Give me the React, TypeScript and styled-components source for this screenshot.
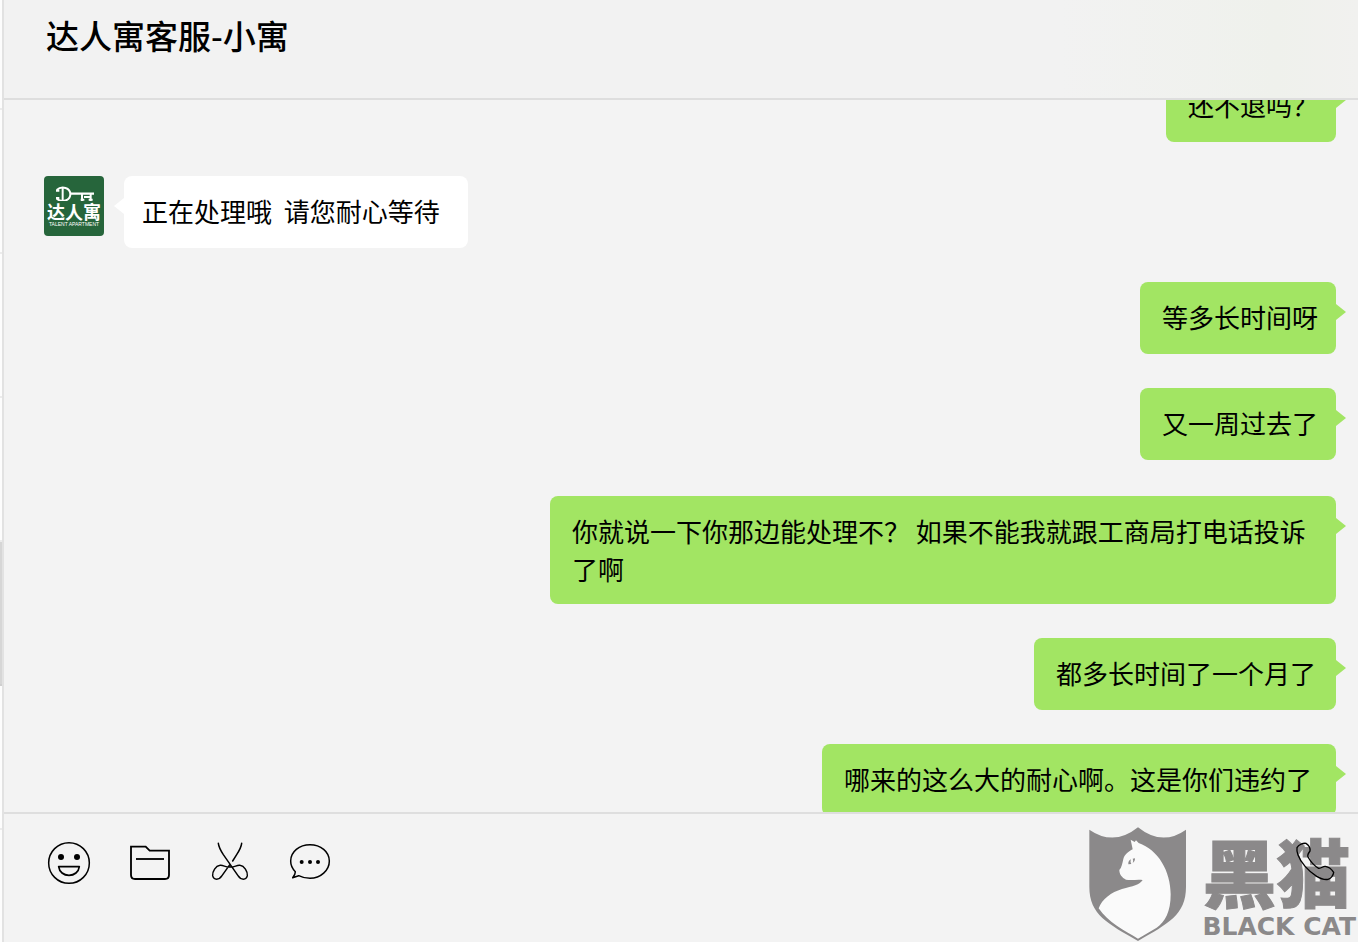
import React from 'react';
import styled, { createGlobalStyle, css } from 'styled-components';

const GlobalStyle = createGlobalStyle`
  * { box-sizing: border-box; }
  html, body, #root { height: 100%; }
  body {
    margin: 0;
    overflow: hidden;
    background: #f3f3f3;
    color: #000;
    font-family: "Noto Sans CJK SC", "Liberation Sans", sans-serif;
  }
`;

const Window = styled.div`
  display: flex;
  height: 100%;
`;

const Sessions = styled.ul`
  flex: none;
  width: 2px;
  margin: 0;
  padding: 0;
  list-style: none;
  overflow: hidden;
  background: #fdfdfd;
`;

const Session = styled.li<{ $first?: boolean; $active?: boolean }>`
  height: ${(p) => (p.$first ? 110 : 144)}px;
  border-bottom: 2px solid #ececec;
  ${(p) => p.$active && css`
    background: #d6d6d6;
    border-color: #cfcfcf;
  `}
`;

const Chat = styled.main`
  flex: 1;
  min-width: 0;
  display: flex;
  flex-direction: column;
  border-left: 2px solid #e2e2e2;
`;

const Header = styled.header`
  flex: none;
  height: 100px;
  padding: 11px 42px;
  border-bottom: 2px solid #dedede;
  background: linear-gradient(90deg, #f2f2f2 78%, #eff1ec 94%, #f1f1ef);
`;

const Title = styled.h1`
  margin: 0;
  font-size: 33px;
  line-height: 48px;
  font-weight: 500;
`;

const Messages = styled.ol`
  flex: 1;
  min-height: 0;
  margin: 0;
  padding: 0 22px 0 40px;
  list-style: none;
  overflow: hidden;
  display: flex;
  flex-direction: column;
  gap: 34px;

  & > :first-child { margin-top: -30px; }
`;

const Row = styled.li<{ $mine: boolean; $long?: boolean }>`
  flex: none;
  display: flex;
  align-items: flex-start;
  justify-content: ${(p) => (p.$mine ? 'flex-end' : 'flex-start')};
  gap: 20px;
  padding-top: ${(p) => (p.$long ? 2 : 0)}px;
`;

const Bubble = styled.p<{ $mine: boolean; $min: number }>`
  position: relative;
  margin: 0;
  min-width: ${(p) => p.$min}px;
  max-width: 786px;
  min-height: 72px;
  padding: ${(p) => (p.$mine ? '16px 14px 16px 22px' : '16px 18px')};
  border-radius: 8px;
  background: ${(p) => (p.$mine ? '#a2e563' : '#fff')};
  font-size: 26px;
  line-height: 38px;
  white-space: pre-wrap;

  &::after {
    content: '';
    position: absolute;
    top: 22px;
    border: 8px solid transparent;
    ${(p) => p.$mine
      ? css`left: 100%; border-left: 10px solid #a2e563; border-right: 0;`
      : css`right: 100%; border-right: 10px solid #fff; border-left: 0;`}
  }
`;

const AvatarBox = styled.div`
  flex: none;
  width: 60px;
  height: 60px;
  padding-top: 9px;
  border-radius: 4px;
  overflow: hidden;
  background: #26653b;
  color: #fff;
  display: flex;
  flex-direction: column;
  align-items: center;

  svg { flex: none; display: block; }
`;

const AvatarName = styled.span`
  font-size: 18px;
  line-height: 20px;
  font-weight: 700;
`;

const AvatarSub = styled.span`
  font-family: "Liberation Sans", sans-serif;
  font-size: 5px;
  line-height: 6px;
  white-space: nowrap;
`;

const Footer = styled.footer`
  position: relative;
  flex: none;
  height: 130px;
  border-top: 2px solid #dedede;
  background: #f3f3f3;
`;

const Toolbar = styled.div`
  position: relative;
  z-index: 1;
  display: flex;
  gap: 38px;
  padding: 28px 22px 0 44px;
`;

const Tool = styled.button<{ $end?: boolean }>`
  width: 42px;
  height: 42px;
  padding: 0;
  border: 0;
  background: none;
  color: #000;
  cursor: pointer;
  ${(p) => p.$end && css`margin-left: auto;`}

  svg { display: block; width: 42px; height: 42px; overflow: visible; }
`;

const Watermark = styled.div`
  position: absolute;
  right: 2px;
  bottom: 0;
  display: flex;
  align-items: flex-end;
  gap: 15px;
  color: #8b898a;

  svg { display: block; }
`;

const Brand = styled.div`
  display: flex;
  flex-direction: column;
`;

const BrandName = styled.span`
  font-size: 74px;
  line-height: 84px;
  font-weight: 900;
  -webkit-text-stroke: 1px #8b898a;
`;

const BrandLatin = styled.span`
  font-family: "DejaVu Sans", sans-serif;
  font-size: 25px;
  line-height: 30px;
  font-weight: 700;
`;

function Avatar() {
  return (
    <AvatarBox>
      <svg width="40" height="16" viewBox="30 27 120 48" fill="none" stroke="#fff">
        <path d="M38 42 C54 28 79 36 79 55 C79 74 54 81 38 68" strokeWidth="6" />
        <path d="M56 36 V74 M36 44 H46 M36 66 H46" strokeWidth="6" />
        <path d="M79 53 H150" strokeWidth="7" />
        <path d="M114 54 V75 M110 71 H121 M120 63 H138 M140 54 V75 M134 71 H146" strokeWidth="6" />
      </svg>
      <AvatarName>达人寓</AvatarName>
      <AvatarSub>TALENT APARTMENT</AvatarSub>
    </AvatarBox>
  );
}

const line = {
  fill: 'none',
  stroke: 'currentColor',
  strokeWidth: 4.5,
  strokeLinejoin: 'round' as const,
  strokeLinecap: 'round' as const,
};

const SmileIcon = () => (
  <svg viewBox="54 51 126 126" {...line}>
    <circle cx="117" cy="114" r="61" />
    <path d="M86 125 H148 C146 141 133 151 117 151 S88 141 86 125Z" strokeWidth="5" />
    <g fill="currentColor" stroke="none">
      <circle cx="93" cy="96" r="9" />
      <circle cx="141" cy="96" r="9" />
    </g>
  </svg>
);

const FolderIcon = () => (
  <svg viewBox="294 51 126 126" {...line} strokeWidth={5.5} strokeLinecap="butt" strokeLinejoin="miter">
    <path d="M303 65 H347 L359 77 H417 V150 Q417 162 405 162 H315 Q303 162 303 150Z" />
    <path d="M318 102 H402" />
  </svg>
);

const ScissorsIcon = () => (
  <svg viewBox="534 51 126 126" {...line}>
    <path d="M565 55 C566 64 573 78 580 89 L624 152 C633 166 649 166 652 152 C653 139 643 123 630 121 C621 119 612 128 600 126 C588 128 579 119 570 121 C557 123 547 139 548 152 C551 166 567 166 576 152 L600 118" />
    <path d="M635 55 C634 64 627 78 620 89 L608 108" />
  </svg>
);

const HistoryIcon = () => (
  <svg viewBox="774 51 126 126" {...line}>
    <path d="M796 140 C787 131 782 120 782 108 C782 80 808 59 840 59 S898 80 898 108 S872 160 840 160 C828 160 816 157 806 152 L788 158 C793 152 796 146 796 140Z" />
    <g fill="currentColor" stroke="none">
      <circle cx="815" cy="111" r="6" />
      <circle cx="840" cy="111" r="6" />
      <circle cx="864" cy="111" r="6" />
    </g>
  </svg>
);

const PhoneIcon = () => (
  <svg viewBox="648 81 126 126" {...line} strokeWidth={4}>
    <path d="M657 98 C662 88 676 84 684 85 C692 90 697 100 696 108 C690 116 687 120 690 126 C699 142 711 154 722 160 C731 161 734 153 742 154 C753 156 762 164 767 172 C766 182 758 191 750 193 C740 195 728 191 716 184 C690 168 668 142 660 120 C657 112 656 104 657 98Z" />
  </svg>
);

const CatShield = () => (
  <svg width="99" height="116" viewBox="30 33 297 348">
    <path
      fill="#8b898a"
      d="M34 44 Q108 95 180 37 Q252 95 324 44 V215 C324 300 270 325 180 378 C90 325 34 300 34 215Z"
    />
    <path
      fill="#fafafa"
      d="M158 74 L170 81 L174 76 L182 84 C240 104 278 168 278 238 C278 290 262 320 236 338 L180 371 C140 347 90 322 62 280 C72 252 100 232 132 222 C164 214 186 209 194 195 C176 193 160 197 144 194 C132 188 124 178 124 165 C131 158 133 146 136 132 C141 116 152 110 164 103Z"
    />
    <path fill="#8b898a" d="M151 148 C150 140 154 135 159 133 C157 138 157 143 160 147Z" />
    <path fill="#8b898a" d="M164 131 L171 130 C171 137 169 141 164 144 C166 140 166 135 164 131Z" />
  </svg>
);

const messages = [
  { text: '还不退吗？', mine: true, min: 170 },
  { text: '正在处理哦  请您耐心等待', mine: false, min: 344 },
  { text: '等多长时间呀', mine: true, min: 196 },
  { text: '又一周过去了', mine: true, min: 196 },
  { text: '你就说一下你那边能处理不？ 如果不能我就跟工商局打电话投诉了啊', mine: true, min: 786, long: true },
  { text: '都多长时间了一个月了', mine: true, min: 302 },
  { text: '哪来的这么大的耐心啊。这是你们违约了', mine: true, min: 514 },
];

const tools = [
  { label: '表情', Icon: SmileIcon },
  { label: '文件', Icon: FolderIcon },
  { label: '截图', Icon: ScissorsIcon },
  { label: '聊天记录', Icon: HistoryIcon },
];

export default function App() {
  return (
    <>
      <GlobalStyle />
      <Window>
        <Sessions>
          <Session $first />
          <Session />
          <Session />
          <Session />
          <Session $active />
          <Session />
        </Sessions>
        <Chat>
          <Header>
            <Title>达人寓客服-小寓</Title>
          </Header>
          <Messages>
            {messages.map((m) => (
              <Row key={m.text} $mine={m.mine} $long={m.long}>
                {!m.mine && <Avatar />}
                <Bubble $mine={m.mine} $min={m.min}>{m.text}</Bubble>
              </Row>
            ))}
          </Messages>
          <Footer>
            <Toolbar>
              {tools.map(({ label, Icon }) => (
                <Tool key={label} type="button" aria-label={label}><Icon /></Tool>
              ))}
              <Tool type="button" aria-label="语音通话" $end><PhoneIcon /></Tool>
            </Toolbar>
            <Watermark>
              <CatShield />
              <Brand>
                <BrandName>黑猫</BrandName>
                <BrandLatin>BLACK CAT</BrandLatin>
              </Brand>
            </Watermark>
          </Footer>
        </Chat>
      </Window>
    </>
  );
}
